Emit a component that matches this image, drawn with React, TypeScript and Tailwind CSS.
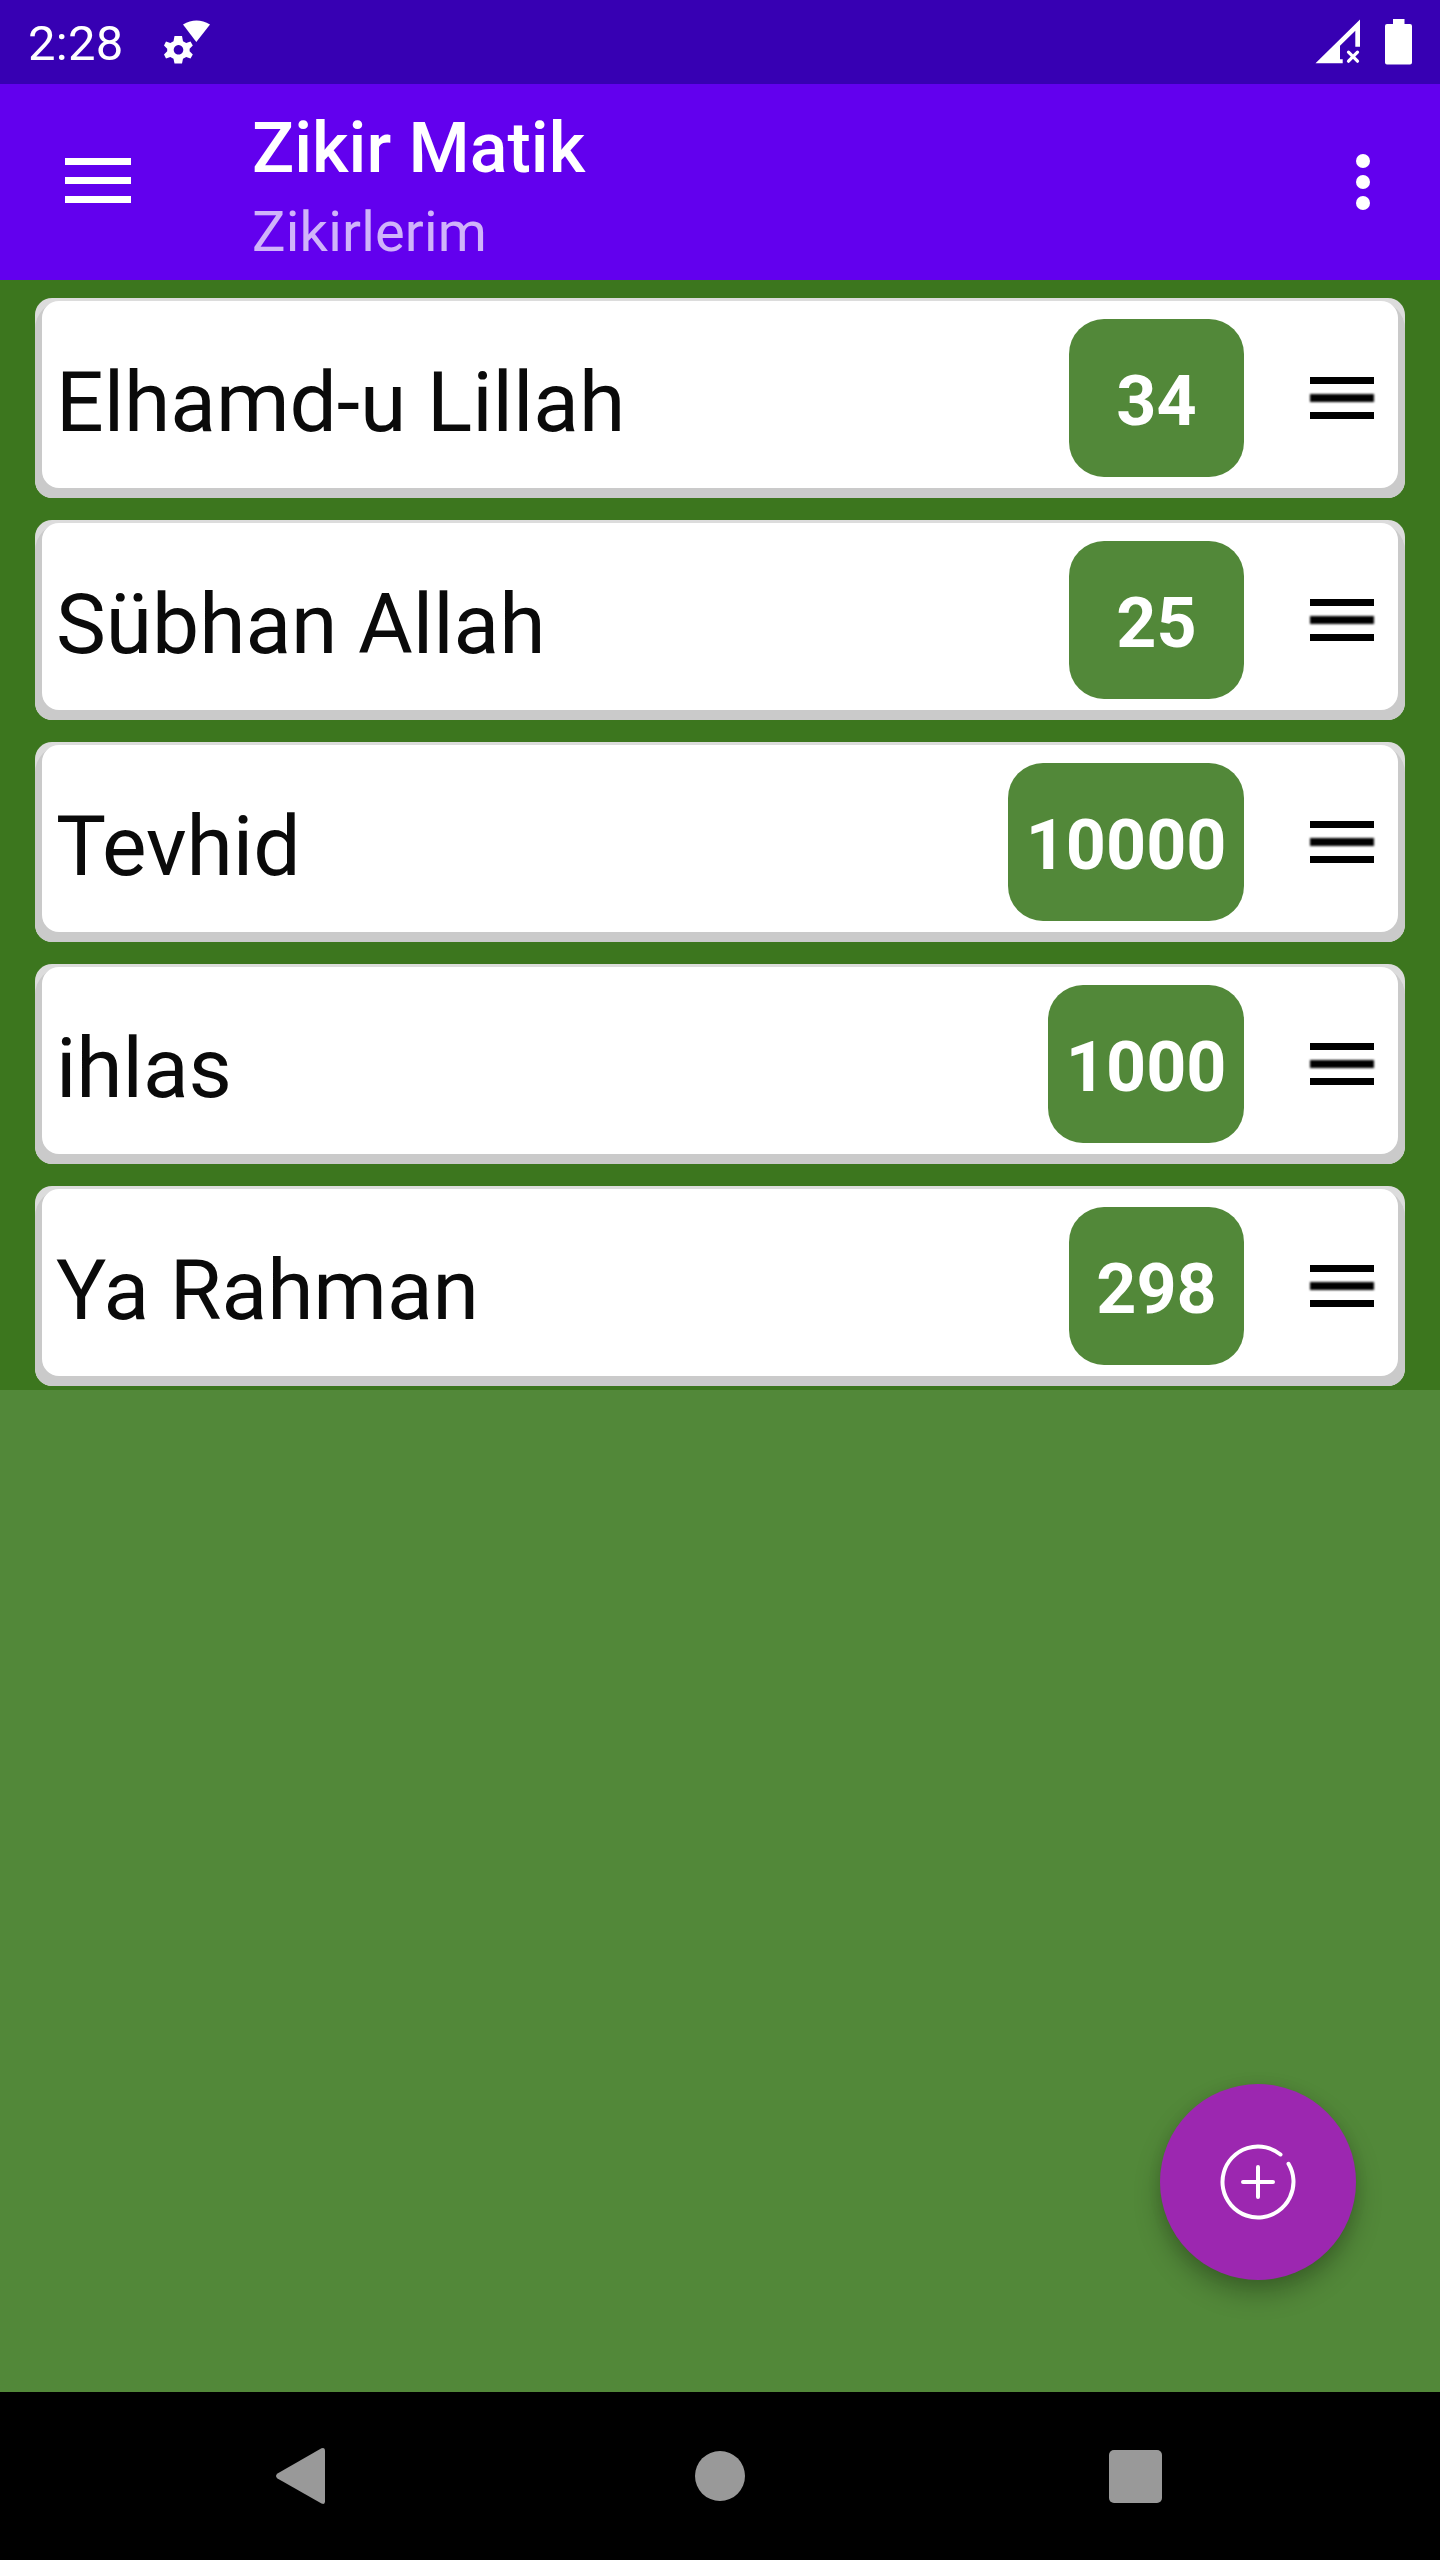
const items = [
  { name: "Elhamd-u Lillah", count: 34 },
  { name: "Sübhan Allah", count: 25 },
  { name: "Tevhid", count: 10000 },
  { name: "ihlas", count: 1000 },
  { name: "Ya Rahman", count: 298 },
];

function StatusBar() {
  return (
    <div className="flex h-[84px] shrink-0 items-center bg-[#3700b3] pl-[28px] pr-[28px] text-white">
      <span className="mt-[3px] w-[96px] text-[49px] leading-none tracking-[0.3px]">2:28</span>
      <svg className="ml-[40px]" width="48" height="48" viewBox="164 18 48 48" fill="currentColor">
        <path d="M183 24.5Q196.500 16.500 210 24.500L196.300 42Z" />
        <path
          fillRule="evenodd"
          d="M174.500 36h7.500l1 5.200 3.200 1.900 4.300-1.700 2.300 4-3.200 3.300v2.500l3.200 3.300-2.300 4-4.300-1.600-3.200 1.900-1 4.700h-7.500l-1-4.700-3.200-1.900-4.300 1.600-2-4 3.200-3.300v-2.500l-3.200-3.300 2-4 4.300 1.700 3.200-1.900zM178.500 45a4.800 4.800 0 1 0 .01 0z"
        />
      </svg>
      <div className="flex-1" />
      <svg width="45" height="46" viewBox="1315 19 45 46" fill="currentColor">
        <path d="M1360 19.500V46.700H1355.300V30.700L1340 45.700V59.300h2.700v4H1315.500z" />
        <path
          d="M1348.500 52.200l9 9M1357.500 52.200l-9 9"
          stroke="currentColor"
          strokeWidth="3.200"
          strokeLinecap="round"
        />
      </svg>
      <svg className="ml-[25px]" width="27" height="46" viewBox="0 0 27 46" fill="currentColor">
        <path d="M8 0h11.500v5H25a2 2 0 0 1 2 2v36.500a2 2 0 0 1-2 2H2a2 2 0 0 1-2-2V7a2 2 0 0 1 2-2h6z" />
      </svg>
    </div>
  );
}

function AppBar() {
  return (
    <header className="flex h-[196px] shrink-0 items-center bg-[#6200ee] pl-[65px] pr-[70px] text-white">
      <div className="-mt-[3px] flex w-[66px] flex-col gap-3">
        <div className="h-[7px] bg-white" />
        <div className="h-[7px] bg-white" />
        <div className="h-[7px] bg-white" />
      </div>
      <div className="mt-[3px] ml-[121px] flex-1">
        <h1 className="text-[70px] leading-[82px] font-medium">Zikir Matik</h1>
        <p className="mt-[14px] -mb-px text-[56px] leading-[58px] tracking-[0.2px] text-white/70">Zikirlerim</p>
      </div>
      <div className="flex flex-col gap-[7px]">
        <div className="size-[14px] rounded-full bg-white" />
        <div className="size-[14px] rounded-full bg-white" />
        <div className="size-[14px] rounded-full bg-white" />
      </div>
    </header>
  );
}

function Row({ name, count }: { name: string; count: number }) {
  return (
    <li className="h-[200px] overflow-hidden rounded-[17px] bg-[#dcdcdc] pt-[3px]">
      <div className="h-full rounded-t-[28px] rounded-b-[17px] bg-[#cacaca] px-[7px] pb-[10px]">
        <div className="flex h-full items-center rounded-[17px] bg-white pr-[24px] pl-[14px]">
          <span className="mt-[17px] flex-1 text-[84px] leading-[98px] tracking-[-0.06px] text-[#0a0a0a]">{name}</span>
          <span className="mt-[6px] flex h-[158px] min-w-[175px] items-center justify-center rounded-[35px] bg-[#528839] px-[17.500px] pt-[6px] text-[70px] leading-none font-bold text-white">
            {count}
          </span>
          <div className="mt-[7px] ml-[66px] flex w-[64px] flex-col gap-[10px] blur-[0.6px]">
            <div className="h-[7.500px] bg-black" />
            <div className="h-[7.500px] bg-black blur-[1px]" />
            <div className="h-[7.500px] bg-black" />
          </div>
        </div>
      </div>
    </li>
  );
}

function NavBar() {
  return (
    <nav className="flex h-[168px] shrink-0 items-center bg-black pl-[275px] text-[#999999]">
      <svg width="50" height="58" viewBox="0 0 50 58" fill="currentColor">
        <path d="M46.500 1.300Q50 0 50 3.500V54.500Q50 58 46.500 56.500L2.500 31.500Q-.5 29 2.500 26.500z" />
      </svg>
      <div className="ml-[370px] size-[50px] rounded-full bg-current" />
      <div className="ml-[363.500px] size-[53px] rounded-[5px] bg-current" />
    </nav>
  );
}

export default function App() {
  return (
    <div className="relative flex h-[2560px] w-[1440px] flex-col bg-[#528839] font-[Roboto,sans-serif]">
      <StatusBar />
      <AppBar />
      <ul className="flex flex-col gap-[22px] bg-[#3c761e] px-[35px] pt-[18px] pb-[4px]">
        {items.map((item) => (
          <Row key={item.name} {...item} />
        ))}
      </ul>
      <div className="flex-1" />
      <button className="absolute top-[2084px] left-[1160px] flex size-[196px] items-center justify-center rounded-full bg-[#9c27b0] shadow-[0_14px_26px_rgba(0,0,0,0.26),0_2px_14px_rgba(0,0,0,0.08)]">
        <svg width="84" height="84" viewBox="-42 -42 84 84" fill="none" stroke="white" strokeWidth="4" strokeLinecap="round">
          <path d="M22.500-27.500A35.500 35.500 0 1 0 30.500-18.200M0-15V15M-15 0H15" />
        </svg>
      </button>
      <NavBar />
    </div>
  );
}
